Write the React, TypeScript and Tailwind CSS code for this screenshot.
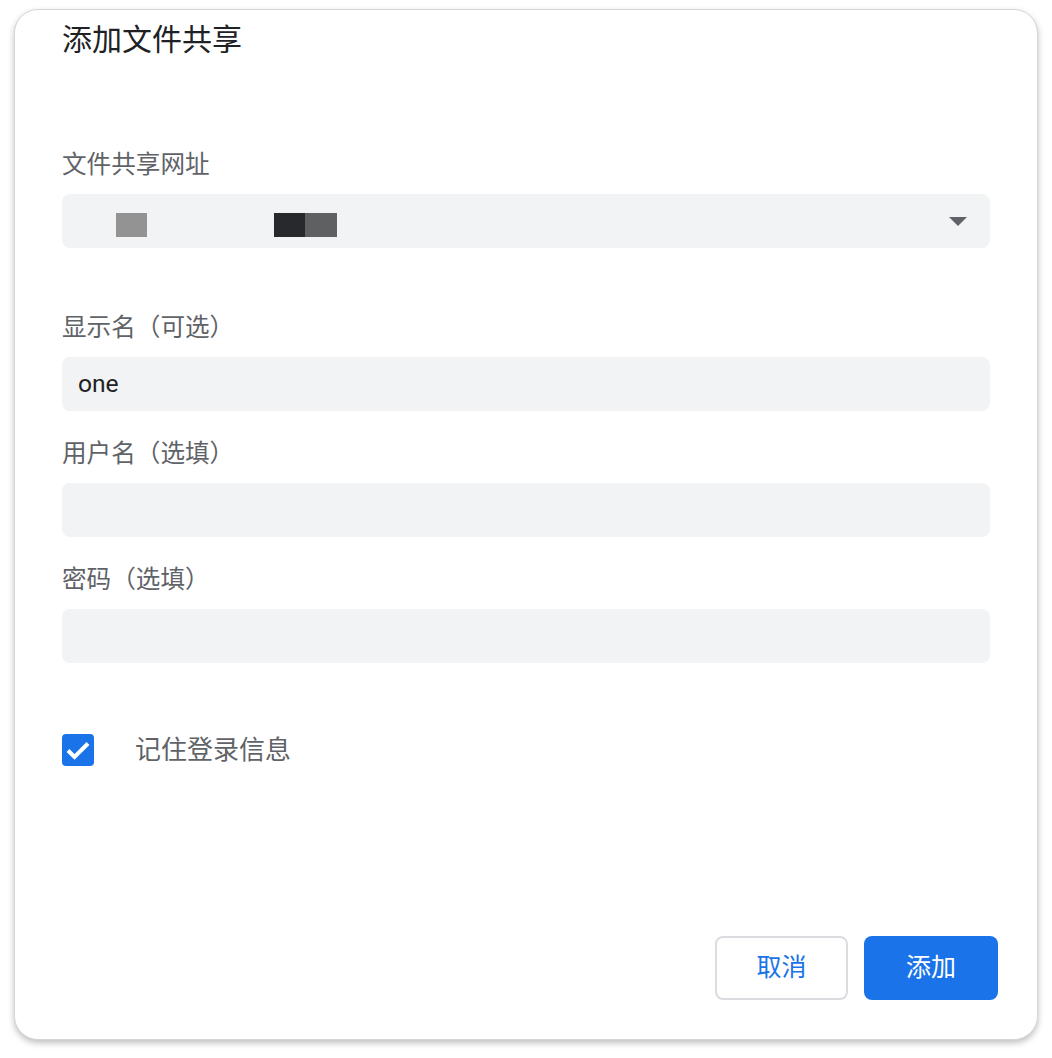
import React from 'react';

const font = { fontFamily: '"Roboto", "Noto Sans CJK SC", sans-serif' };

const Field = ({ label, value, top }: { label: string; value?: string; top: string }) => (
  <div className={`flex flex-col ${top}`}>
    <label className="text-[24.6px] leading-[30px] text-[#5f6368]">{label}</label>
    <div className="mt-[14px] h-[54px] rounded-[8px] bg-[#f1f3f4] px-4 flex items-center text-[24.6px] text-[#202124]">
      {value}
    </div>
  </div>
);

export default function App() {
  return (
    <div className="bg-white w-[1052px] h-[1058px] pt-[9px] pl-[14px]" style={font}>
      <div className="w-[1024px] h-[1031px] rounded-[24px] bg-white border border-[#d6d6d6] shadow-[0_3px_6px_rgba(0,0,0,0.25)] flex flex-col pl-[47px] pr-[47px] pt-[12px] pb-[39px]">
        <h1 className="text-[30px] leading-[36px] text-[#202124] font-normal">添加文件共享</h1>

        <div className="flex flex-col mt-[92px]">
          <label className="text-[24.6px] leading-[30px] text-[#5f6368]">文件共享网址</label>
          <div className="mt-[14px] h-[54px] rounded-[8px] bg-[#f1f3f4] flex items-center relative">
            <div className="absolute left-[54px] top-[19px] w-[31px] h-[24px] bg-[#939393]" />
            <div className="absolute left-[212px] top-[19px] w-[31px] h-[24px] bg-[#28292c]" />
            <div className="absolute left-[243px] top-[19px] w-[32px] h-[24px] bg-[#5f6062]" />
            <svg className="absolute right-[23px] top-[23px]" width="18" height="9" viewBox="0 0 18 9">
              <path d="M0 0 H18 L9 9 Z" fill="#5f6368" />
            </svg>
          </div>
        </div>

        <Field label="显示名（可选）" value="one" top="mt-[65px]" />
        <Field label="用户名（选填）" top="mt-[28px]" />
        <Field label="密码（选填）" top="mt-[28px]" />

        <div className="flex items-center mt-[71px]">
          <div className="w-[32px] h-[32px] rounded-[4px] bg-[#1a73e8]">
            <svg width="32" height="32" viewBox="0 0 32 32">
              <path d="M6 16.5 L12.5 23 L26 9.5" fill="none" stroke="white" strokeWidth="4" />
            </svg>
          </div>
          <span className="ml-[41px] text-[26px] leading-[32px] text-[#5f6368]">记住登录信息</span>
        </div>

        <div className="mt-auto flex justify-end gap-4 -mr-[8px]">
          <button className="w-[133px] h-[64px] rounded-[8px] border-2 border-[#dadce0] bg-white text-[#1a73e8] text-[25px]">
            取消
          </button>
          <button className="w-[134px] h-[64px] rounded-[8px] bg-[#1a73e8] text-white text-[25px]">
            添加
          </button>
        </div>
      </div>
    </div>
  );
}
